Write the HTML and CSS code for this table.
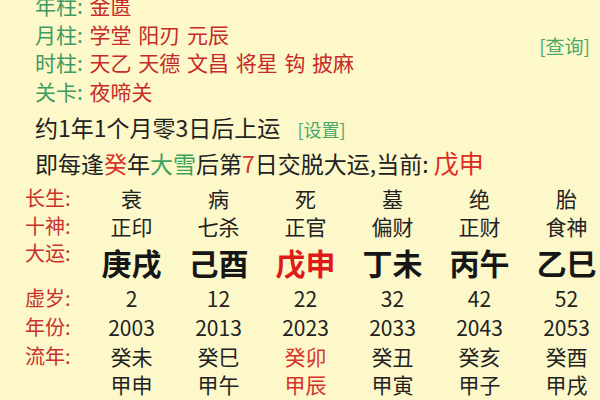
FILE: index.html
```html
<!DOCTYPE html>
<html lang="zh">
<head>
<meta charset="utf-8">
<link rel="stylesheet" href="styles.css">
</head>
<body>
<div class="page">
  <div class="top">
    <div class="rows">
      <div class="row"><span class="lbl">年柱:</span> <span class="val">金匮</span></div>
      <div class="row"><span class="lbl">月柱:</span> <span class="val">学堂 阳刃 元辰</span></div>
      <div class="row"><span class="lbl">时柱:</span> <span class="val">天乙 天德 文昌 将星 钩 披麻</span></div>
      <div class="row"><span class="lbl">关卡:</span> <span class="val">夜啼关</span></div>
    </div>
    <div class="query">[查询]</div>
  </div>
  <div class="line1">约1年1个月零3日后上运 <span class="link">[设置]</span></div>
  <div class="line2">即每逢<span class="red">癸</span>年<span class="green">大雪</span>后第<span class="red">7</span>日交脱大运,当前: <span class="cur">戊申</span></div>
  <div class="table">
    <div class="tl">长生:</div>
    <div class="c">衰</div><div class="c">病</div><div class="c">死</div><div class="c">墓</div><div class="c">绝</div><div class="c">胎</div>
    <div class="tl">十神:</div>
    <div class="c">正印</div><div class="c">七杀</div><div class="c">正官</div><div class="c">偏财</div><div class="c">正财</div><div class="c">食神</div>
    <div class="tl tl-big">大运:</div>
    <div class="c big">庚戌</div><div class="c big">己酉</div><div class="c big hot">戊申</div><div class="c big">丁未</div><div class="c big">丙午</div><div class="c big">乙巳</div>
    <div class="tl">虚岁:</div>
    <div class="c">2</div><div class="c">12</div><div class="c">22</div><div class="c">32</div><div class="c">42</div><div class="c">52</div>
    <div class="tl">年份:</div>
    <div class="c">2003</div><div class="c">2013</div><div class="c">2023</div><div class="c">2033</div><div class="c">2043</div><div class="c">2053</div>
    <div class="tl">流年:</div>
    <div class="c">癸未</div><div class="c">癸巳</div><div class="c hot2">癸卯</div><div class="c">癸丑</div><div class="c">癸亥</div><div class="c">癸酉</div>
    <div class="tl"></div>
    <div class="c">甲申</div><div class="c">甲午</div><div class="c hot2">甲辰</div><div class="c">甲寅</div><div class="c">甲子</div><div class="c">甲戌</div>
  </div>
</div>
</body>
</html>
```

FILE: styles.css
```css
html, body {
  margin: 0;
  padding: 0;
  background: #fcf8c9;
  overflow: hidden;
}
body {
  width: 600px;
  height: 400px;
  font-family: "Noto Sans CJK SC", "Noto Sans", sans-serif;
  color: #222;
}
.page {
  width: 600px;
  height: 400px;
  overflow: hidden;
}
.top {
  display: flex;
  justify-content: space-between;
  margin-top: -9px;
  padding-left: 35px;
  padding-right: 10px;
}
.row {
  font-size: 21px;
  line-height: 28.5px;
  height: 28.5px;
  white-space: nowrap;
  word-spacing: 2px;
}
.lbl { color: #3f9b5f; }
.val { color: #c62a2a; }
.query {
  color: #48a86a;
  font-size: 19px;
  line-height: 28px;
  padding-top: 41px;
}
.line1 {
  padding-left: 35px;
  font-size: 23px;
  line-height: 44px;
  height: 44px;
  white-space: nowrap;
  word-spacing: 12px;
}
.link {
  color: #48a86a;
  font-size: 18px;
  word-spacing: 0;
}
.line2 {
  padding-left: 35px;
  font-size: 23px;
  line-height: 26px;
  height: 26px;
  white-space: nowrap;
}
.red { color: #d8302c; }
.green { color: #3ea35f; }
.cur { color: #dc2a26; font-size: 25px; }
.table {
  margin-top: 9px;
  padding-left: 25px;
  display: grid;
  grid-template-columns: 63px repeat(6, 87px);
  grid-template-rows: 28px 28px 44px 29px 29px 28px 28px;
  font-size: 21px;
  line-height: 28px;
  white-space: nowrap;
}
.tl {
  color: #c8302e;
  font-size: 20px;
}
.tl-big {
  line-height: 26px;
}
.c {
  text-align: center;
  color: #222;
}
.big {
  font-size: 30px;
  font-weight: bold;
  line-height: 44px;
  color: #161616;
}
.hot { color: #e01a1a; }
.hot2 { color: #d8302c; }
```
